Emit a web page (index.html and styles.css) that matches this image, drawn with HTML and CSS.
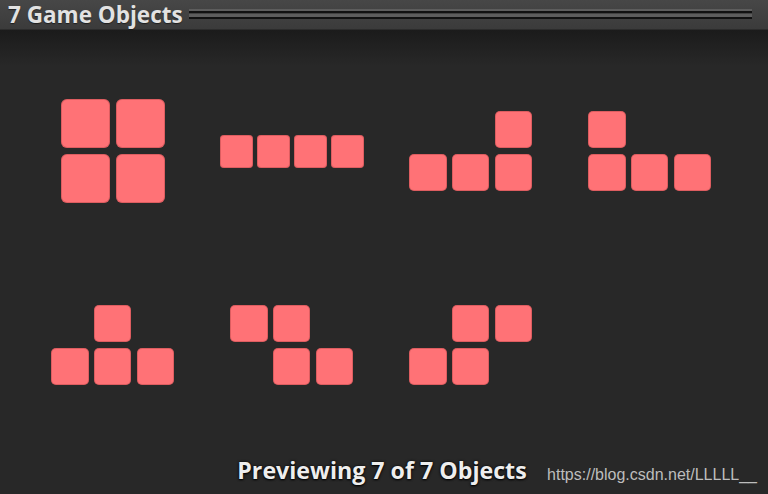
FILE: index.html
```html
<!DOCTYPE html>
<html lang="en">
<head>
    <meta charset="UTF-8">
    <meta name="viewport" content="width=device-width, initial-scale=1.0">
    <title>7 Game Objects</title>
    <link rel="stylesheet" href="styles.css">
</head>
<body>
    <div class="header">
        <h1>7 Game Objects</h1>
        <div class="rule"></div>
    </div>

    <div class="preview">
        <div class="grid">
            <!-- O -->
            <div class="slot">
                <div class="piece big cols2">
                    <i class="blk"></i><i class="blk"></i>
                    <i class="blk"></i><i class="blk"></i>
                </div>
            </div>
            <!-- I -->
            <div class="slot">
                <div class="piece small cols4">
                    <i class="blk"></i><i class="blk"></i><i class="blk"></i><i class="blk"></i>
                </div>
            </div>
            <!-- L -->
            <div class="slot">
                <div class="piece cols3">
                    <i></i><i></i><i class="blk"></i>
                    <i class="blk"></i><i class="blk"></i><i class="blk"></i>
                </div>
            </div>
            <!-- J -->
            <div class="slot">
                <div class="piece cols3">
                    <i class="blk"></i><i></i><i></i>
                    <i class="blk"></i><i class="blk"></i><i class="blk"></i>
                </div>
            </div>
            <!-- T -->
            <div class="slot">
                <div class="piece cols3">
                    <i></i><i class="blk"></i><i></i>
                    <i class="blk"></i><i class="blk"></i><i class="blk"></i>
                </div>
            </div>
            <!-- Z -->
            <div class="slot">
                <div class="piece cols3">
                    <i class="blk"></i><i class="blk"></i><i></i>
                    <i></i><i class="blk"></i><i class="blk"></i>
                </div>
            </div>
            <!-- S -->
            <div class="slot">
                <div class="piece cols3">
                    <i></i><i class="blk"></i><i class="blk"></i>
                    <i class="blk"></i><i class="blk"></i><i></i>
                </div>
            </div>
        </div>

        <div class="footer">Previewing 7 of 7 Objects</div>
        <div class="mark">https://blog.csdn.net/LLLLL__</div>
    </div>
</body>
</html>
```

FILE: styles.css
```css
html, body {
    margin: 0;
    height: 100%;
}
body {
    background: #282828;
    font-family: "Open Sans", "DejaVu Sans", sans-serif;
    display: flex;
    flex-direction: column;
    overflow: hidden;
}

/* title bar */
.header {
    height: 29px;
    display: flex;
    align-items: center;
    gap: 6px;
    padding: 0 16px 0 8px;
    background: linear-gradient(#474747, #3b3b3b);
    border-bottom: 1px solid #2c2c2c;
}
.header h1 {
    margin: 0;
    font-size: 22.5px;
    font-weight: 700;
    color: #e2e2e2;
    line-height: 29px;
    text-shadow: 0 1px 1px rgba(0, 0, 0, 0.5);
}
.rule {
    flex: 1;
    height: 10px;
    align-self: flex-start;
    margin-top: 9px;
    background: linear-gradient(#5d5d5d 0 2px, #111 2px 4px, transparent 4px 5px, #5d5d5d 5px 8px, #111 8px 10px);
}

/* preview area */
.preview {
    flex: 1;
    position: relative;
    display: flex;
    flex-direction: column;
    background: linear-gradient(#1b1b1b, #282828 36px);
}
.grid {
    display: grid;
    grid-template-columns: repeat(4, 179px);
    grid-auto-rows: 194px;
    padding: 24px 0 0 23px;
}
.slot {
    display: flex;
    align-items: center;
    justify-content: center;
}

.piece {
    display: grid;
    --cell: 37.5px;
    --gap: 5.25px;
    grid-auto-rows: var(--cell);
    gap: var(--gap);
}
.piece.big {
    --cell: 49px;
    --gap: 6px;
}
.piece.small {
    --cell: 33px;
    --gap: 4px;
}
.cols2 { grid-template-columns: repeat(2, var(--cell)); }
.cols3 { grid-template-columns: repeat(3, var(--cell)); }
.cols4 { grid-template-columns: repeat(4, var(--cell)); }

.blk {
    background: #ff7276;
    border-radius: 5px;
    box-shadow: inset 0 0 0 1px rgba(120, 30, 30, 0.25);
}
.big .blk { border-radius: 6px; }
.small .blk { border-radius: 4px; }

.footer {
    margin-top: auto;
    height: 52px;
    line-height: 28px;
    padding: 14px 4px 0 0;
    box-sizing: border-box;
    text-align: center;
    font-size: 23.2px;
    font-weight: 700;
    color: #eeeeee;
    text-shadow: 0 1px 2px #000, 0 0 3px rgba(0, 0, 0, 0.8);
}

/* watermark in the corner */
.mark {
    position: absolute;
    right: 11px;
    bottom: 10px;
    font-family: "Liberation Sans", Arial, sans-serif;
    font-size: 16px;
    color: #bdbdbd;
}
```
